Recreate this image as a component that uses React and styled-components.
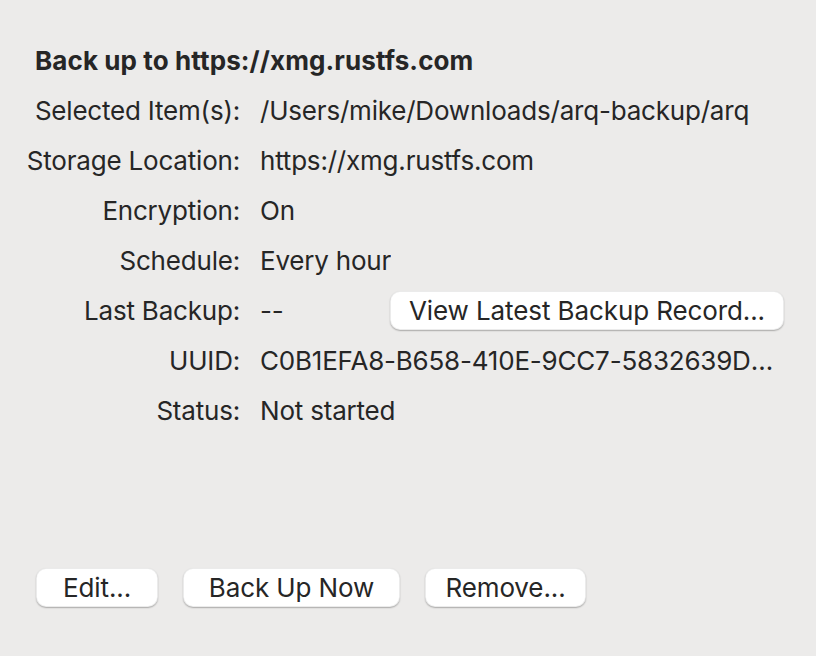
import React from "react";
import styled, { createGlobalStyle } from "styled-components";

const Global = createGlobalStyle`
  html, body { margin: 0; padding: 0; background: #ecebea; }
  body { font-family: Inter, "Noto Sans", "Liberation Sans", sans-serif; color: #262626; }
`;

const Page = styled.div`
  width: 816px;
  height: 656px;
  box-sizing: border-box;
  padding: 35px 0 0 20px;
  display: flex;
  flex-direction: column;
`;

const Title = styled.div`
  height: 50px;
  display: flex;
  align-items: center;
  padding-left: 15px;
  font-size: 26px;
  font-weight: 700;
  letter-spacing: 0.1px;
`;

const Grid = styled.div`
  display: grid;
  grid-template-columns: 220px 524px;
  column-gap: 20px;
  grid-auto-rows: 50px;
  font-size: 26px;
  letter-spacing: -0.2px;
`;

const Label = styled.div`
  display: flex;
  align-items: center;
  justify-content: flex-end;
  white-space: nowrap;
`;

const Value = styled.div`
  display: flex;
  align-items: center;
  justify-content: space-between;
  min-width: 0;
  white-space: nowrap;
`;

const Truncate = styled.span`
  overflow: hidden;
  text-overflow: ellipsis;
  white-space: nowrap;
  max-width: 521px;
`;

const Button = styled.button`
  box-sizing: border-box;
  height: 39px;
  width: ${(p) => p.$w}px;
  flex-shrink: 0;
  border-radius: 10px;
  border: 0.5px solid rgba(0, 0, 0, 0.08);
  background: #ffffff;
  box-shadow: 0 1px 1.5px rgba(0, 0, 0, 0.28);
  font-family: inherit;
  font-size: 26px;
  letter-spacing: -0.1px;
  color: #262626;
  padding: 0;
  display: flex;
  align-items: center;
  justify-content: center;
`;

const Footer = styled.div`
  margin-top: auto;
  margin-bottom: 49px;
  padding-left: 16px;
  display: flex;
  gap: 25px;
`;

const rows = [
  ["Selected Item(s):", "/Users/mike/Downloads/arq-backup/arq"],
  ["Storage Location:", "https://xmg.rustfs.com"],
  ["Encryption:", "On"],
  ["Schedule:", "Every hour"],
  ["Last Backup:", "--", true],
  ["UUID:", "C0B1EFA8-B658-410E-9CC7-5832639D1A2F"],
  ["Status:", "Not started"],
];

export default function App() {
  return (
    <>
      <Global />
      <Page>
        <Title>Back up to https://xmg.rustfs.com</Title>
        <Grid>
          {rows.map(([l, v, btn]) => (
            <React.Fragment key={l}>
              <Label>{l}</Label>
              <Value>
                <Truncate>{v}</Truncate>
                {btn && <Button $w={394}>View Latest Backup Record...</Button>}
              </Value>
            </React.Fragment>
          ))}
        </Grid>
        <Footer>
          <Button $w={122}>Edit...</Button>
          <Button $w={217}>Back Up Now</Button>
          <Button $w={161}>Remove...</Button>
        </Footer>
      </Page>
    </>
  );
}
